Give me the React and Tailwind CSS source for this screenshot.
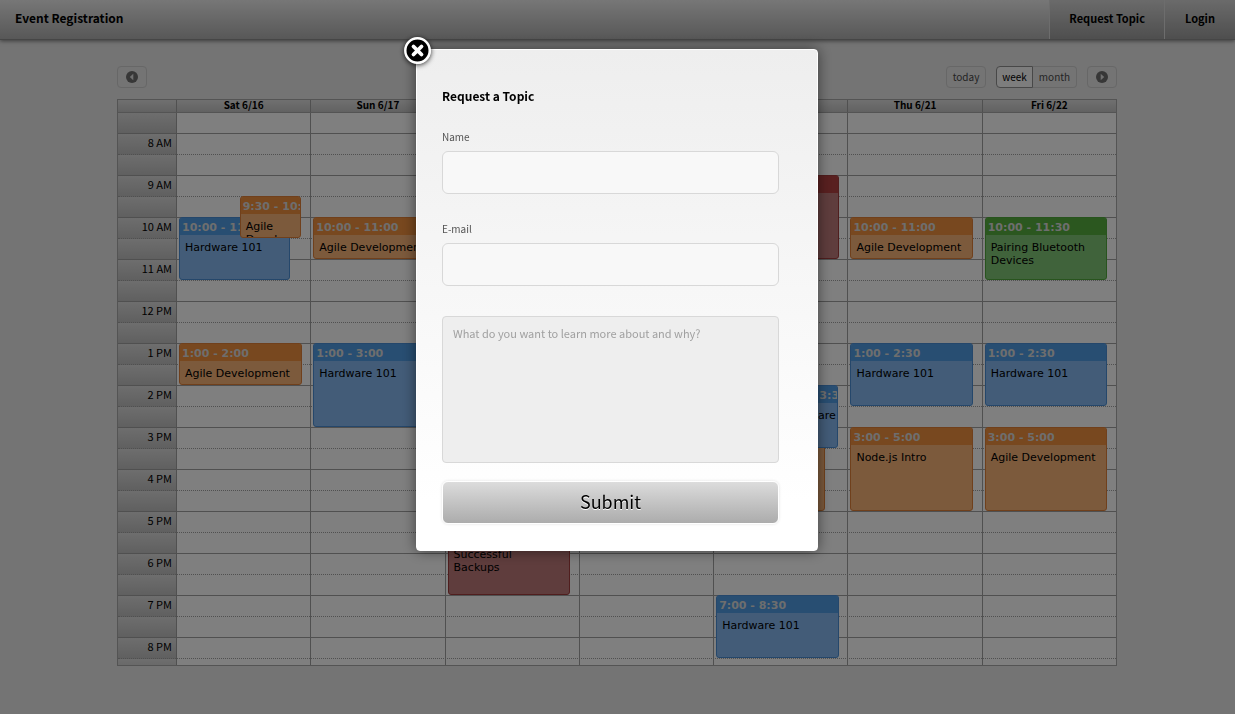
const tones = {
  blue: { box: "bg-[#86b8f0] border-[#4a8fd6]", head: "bg-[#509ce4]" },
  orange: { box: "bg-[#f8b478] border-[#e08038]", head: "bg-[#f0903e]" },
  green: { box: "bg-[#80c676] border-[#50a83c]", head: "bg-[#56ae3e]" },
  red: { box: "bg-[#be7a7a] border-[#a03c3c]", head: "bg-[#b24040]" },
};

const days = [
  { name: "Sat 6/16", events: [
    { tone: "blue", from: 10, to: 11.5, time: "10:00 - 11:30", title: "Hardware 101", width: 83 },
    { tone: "orange", from: 9.5, to: 10.5, time: "9:30 - 10:30", title: "Agile Development", left: 47, width: 46 },
    { tone: "orange", from: 13, to: 14, time: "1:00 - 2:00", title: "Agile Development" },
  ] },
  { name: "Sun 6/17", events: [
    { tone: "orange", from: 10, to: 11, time: "10:00 - 11:00", title: "Agile Development" },
    { tone: "blue", from: 13, to: 15, time: "1:00 - 3:00", title: "Hardware 101" },
  ] },
  { name: "Mon 6/18", events: [
    { tone: "red", from: 17, to: 19, time: "5:00 - 7:00", title: "Strategies for\nSuccessful\nBackups" },
  ] },
  { name: "Tue 6/19", events: [] },
  { name: "Wed 6/20", events: [
    { tone: "red", from: 9, to: 11, time: "9:00 - 11:00", title: "Backups" },
    { tone: "orange", from: 15, to: 17, time: "3:00 - 5:00", title: "Node.js Intro", width: 82 },
    { tone: "blue", from: 14, to: 15.5, time: "2:00 - 3:30", title: "Hardware 101", left: 47, width: 46 },
    { tone: "blue", from: 19, to: 20.5, time: "7:00 - 8:30", title: "Hardware 101" },
  ] },
  { name: "Thu 6/21", events: [
    { tone: "orange", from: 10, to: 11, time: "10:00 - 11:00", title: "Agile Development" },
    { tone: "blue", from: 13, to: 14.5, time: "1:00 - 2:30", title: "Hardware 101" },
    { tone: "orange", from: 15, to: 17, time: "3:00 - 5:00", title: "Node.js Intro" },
  ] },
  { name: "Fri 6/22", events: [
    { tone: "green", from: 10, to: 11.5, time: "10:00 - 11:30", title: "Pairing Bluetooth Devices" },
    { tone: "blue", from: 13, to: 14.5, time: "1:00 - 2:30", title: "Hardware 101" },
    { tone: "orange", from: 15, to: 17, time: "3:00 - 5:00", title: "Agile Development" },
  ] },
];

const FIRST_HOUR = 7.5;
const HOUR_HEIGHT = 42;
const slots = Array.from({ length: 27 }, (_, i) => FIRST_HOUR + i / 2);

function hourLabel(h) {
  if (h % 1) return "";
  return `${h > 12 ? h - 12 : h} ${h < 12 ? "AM" : "PM"}`;
}

function CalendarEvent({ tone, from, to, time, title, left = 1.5, width = 92 }) {
  return (
    <article
      className={`absolute overflow-hidden rounded-[3px] border font-['DejaVu_Sans',sans-serif] text-[11px] leading-[13px] text-black ${tones[tone].box}`}
      style={{
        top: (from - FIRST_HOUR) * HOUR_HEIGHT - 1,
        height: (to - from) * HOUR_HEIGHT,
        left: `${left}%`,
        width: `${width}%`,
      }}
    >
      <div className={`h-[17px] overflow-hidden whitespace-nowrap px-0.5 pt-[3px] font-bold text-[#dcdcdc] ${tones[tone].head}`}>{time}</div>
      <div className="px-[5px] pt-1.5 whitespace-pre-line">{title}</div>
    </article>
  );
}

function Arrow({ flip }) {
  return (
    <svg viewBox="0 0 12 12" className={flip ? "size-3 rotate-180" : "size-3"} aria-hidden="true">
      <circle cx="6" cy="6" r="6" fill="#6e6e6e" />
      <path d="M7.3 2.8v6.4L3.8 6z" fill="#e0e0e0" />
    </svg>
  );
}

const toolButton = "flex h-[22px] items-center justify-center rounded border border-[#cfcfcf] text-[10px] text-[#4a4a4a]";

function Toolbar() {
  return (
    <div className="flex items-center justify-between">
      <button aria-label="Previous week" className={`${toolButton} w-[30px]`}><Arrow /></button>
      <div className="flex items-center gap-2.5">
        <button className={`${toolButton} w-10 pb-0.5`}>today</button>
        <div className="flex">
          <button className="flex h-[22px] w-[37px] items-center justify-center rounded-l border border-[#909090] bg-[#fafafa] pb-0.5 text-[10px] text-black">week</button>
          <button className="flex h-[22px] w-11 items-center justify-center rounded-r border border-l-0 border-[#cfcfcf] pb-0.5 text-[10px] text-[#4a4a4a]">month</button>
        </div>
        <button aria-label="Next week" className={`${toolButton} w-[30px]`}><Arrow flip /></button>
      </div>
    </div>
  );
}

function Calendar() {
  return (
    <section className="mt-[11px] border border-[#a8a8a8]">
      <div className="grid h-3 grid-cols-[58px_1fr] bg-linear-to-b from-[#e0e0e0] to-[#c4c4c4]">
        <div />
        <div className="grid grid-cols-7">
          {days.map((d) => (
            <h2 key={d.name} className="border-l border-[#a0a0a0] text-center text-[10px] leading-[10px] font-bold">{d.name}</h2>
          ))}
        </div>
      </div>
      <div className="relative h-[553px] overflow-hidden border-t border-[#a8a8a8]">
        <table className="w-full table-fixed border-separate border-spacing-0">
          <tbody>
            {slots.map((h, i) => {
              const line = i === 0 ? "" : h % 1 ? "border-t border-dotted border-[#a0a0a0]" : "border-t border-[#a0a0a0]";
              return (
                <tr key={h}>
                  <th scope="row" className={`w-[58px] bg-linear-to-b from-[#dcdcdc] to-[#c0c0c0] p-0 pr-1 text-right align-top text-[11px] leading-4 font-normal ${i === 0 ? "h-5" : "h-[21px]"} ${line}`}>{hourLabel(h)}</th>
                  <td className={`bg-white p-0 ${line}`} />
                </tr>
              );
            })}
          </tbody>
        </table>
        <div className="absolute inset-y-0 right-0 left-[58px] grid grid-cols-7">
          {days.map((d) => (
            <div key={d.name} className="relative border-l border-[#a0a0a0]">
              {d.events.map((e) => <CalendarEvent key={e.from} {...e} />)}
            </div>
          ))}
        </div>
      </div>
    </section>
  );
}

function TextField({ id, label, type }) {
  return (
    <div className="mb-[27px]">
      <label htmlFor={id} className="block text-[10px] leading-4 text-[#555]">{label}</label>
      <input id={id} type={type} className="mt-1.5 block h-[43px] w-full rounded-md border border-[#d8d8d8] bg-[#f8f8f8] px-2.5 text-xs outline-none" />
    </div>
  );
}

function TopicDialog() {
  return (
    <div className="fixed inset-0 overflow-auto bg-black/50 pt-[49px] pr-px">
      <div role="dialog" aria-modal="true" aria-labelledby="topic-title" className="relative mx-auto w-full max-w-[402px] rounded border border-white bg-linear-to-b from-[#eeeeee] to-white to-90% pt-[37px] pr-[38px] pb-[26px] pl-[25px] shadow-[0_0_14px_rgba(0,0,0,0.5)]">
        <button aria-label="Close" className="absolute -top-[13px] -left-[13px] size-[27px] rounded-full shadow-[0_1px_5px_rgba(0,0,0,0.8)]">
          <svg viewBox="0 0 27 27" className="size-full" aria-hidden="true">
            <circle cx="13.5" cy="13.5" r="12.2" fill="#000" stroke="#fff" strokeWidth="2.4" />
            <path d="M9.5 9.5l8 8M17.5 9.5l-8 8" stroke="#fff" strokeWidth="3.8" strokeLinecap="round" />
          </svg>
        </button>
        <form onSubmit={(e) => e.preventDefault()}>
          <h1 id="topic-title" className="mb-6 text-xs leading-[18px] font-bold">Request a Topic</h1>
          <TextField id="name" label="Name" type="text" />
          <TextField id="email" label="E-mail" type="email" />
          <textarea aria-label="Topic" placeholder="What do you want to learn more about and why?" className="mt-[30px] block h-[147px] w-full resize-none rounded border border-[#d8d8d8] bg-[#eeeeee] px-2.5 pt-2 text-[11px] leading-4 outline-none placeholder:text-[#a0a0a0]" />
          <button className="mt-[18px] block h-[43px] w-full rounded-md border border-white bg-linear-to-b from-[#dcdcdc] to-[#acacac] pb-[3px] text-lg leading-9 shadow-[0_0_3px_rgba(0,0,0,0.12)] [text-shadow:0_1px_0_#fff]">Submit</button>
        </form>
      </div>
    </div>
  );
}

export default function App() {
  return (
    <div className="min-h-screen bg-[#e8e8e8] font-['Noto_Sans_CJK_JP','Noto_Sans',sans-serif] text-black">
      <header className="flex h-10 items-stretch justify-between border-b border-[#8c8c8c] bg-linear-to-b from-[#eeeeee] to-[#b0b0b0] shadow-[0_1px_4px_rgba(0,0,0,0.5)]">
        <a href="#home" className="flex items-center px-[15px] pb-1 text-xs font-bold">Event Registration</a>
        <nav className="flex bg-black/10 text-[11px] font-bold">
          <a href="#request" className="flex items-center border-l border-[#dadada] px-[19px] pb-0.5">Request Topic</a>
          <a href="#login" className="flex items-center border-l border-[#dadada] px-5 pb-0.5">Login</a>
        </nav>
      </header>
      <div className="pr-px">
        <main className="mx-auto max-w-[1000px] pt-[26px] pb-12">
          <Toolbar />
          <Calendar />
        </main>
      </div>
      <TopicDialog />
    </div>
  );
}
